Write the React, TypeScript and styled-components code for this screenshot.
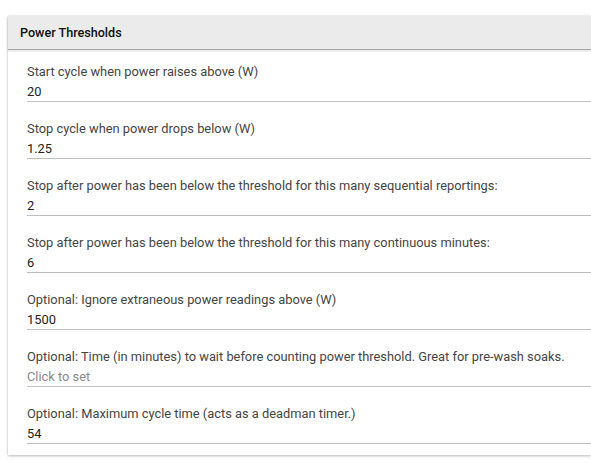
import { createGlobalStyle, styled } from 'styled-components'

const Global = createGlobalStyle`
html, body {
  margin: 0;
  padding: 0;
  background: #fff;
  overflow: hidden;
}
body {
  padding: 16px 0 8px 8px;
  font-family: Roboto, "Liberation Sans", Arial, sans-serif;
}
`

const fields = [
    { label: 'Start cycle when power raises above (W)', value: '20' },
    { label: 'Stop cycle when power drops below (W)', value: '1.25' },
    { label: 'Stop after power has been below the threshold for this many sequential reportings:', value: '2' },
    { label: 'Stop after power has been below the threshold for this many continuous minutes:', value: '6' },
    { label: 'Optional: Ignore extraneous power readings above (W)', value: '1500' },
    { label: 'Optional: Time (in minutes) to wait before counting power threshold. Great for pre-wash soaks.', value: '' },
    { label: 'Optional: Maximum cycle time (acts as a deadman timer.)', value: '54' },
]

const App = () => {
    return (
        <>
            <Global />
            <Card>
                <Header>Power Thresholds</Header>
                <List>
                    {fields.map((f) => (
                        <Field key={f.label}>
                            <Label>{f.label}</Label>
                            <Value $empty={!f.value}>{f.value || 'Click to set'}</Value>
                        </Field>
                    ))}
                </List>
            </Card>
        </>
    )
}

export default App

const Card = styled.div`
width: 583px;
background: #fff;
box-shadow: 0 1px 3px rgba(0, 0, 0, 0.25), 0 0 1px rgba(0, 0, 0, 0.12);
`
const Header = styled.div`
height: 33px;
line-height: 33px;
padding-left: 12px;
background: #ebebeb;
border-bottom: 1px solid #a9a9a9;
box-shadow: 0 1px 2px rgba(0, 0, 0, 0.15);
font-size: 12.6px;
font-weight: 500;
color: #111;
`
const List = styled.div`
display: flex;
flex-direction: column;
gap: 17px;
padding: 12px 0 11px 19px;
`
const Field = styled.div`
display: flex;
flex-direction: column;
`
const Label = styled.div`
font-size: 12.85px;
line-height: 20px;
color: #444;
`
const Value = styled.div<{ $empty: boolean }>`
font-size: 12.85px;
line-height: 19px;
color: ${(p) => (p.$empty ? '#8a8a8a' : '#222')};
border-bottom: 1px solid #bdbdbd;
`
